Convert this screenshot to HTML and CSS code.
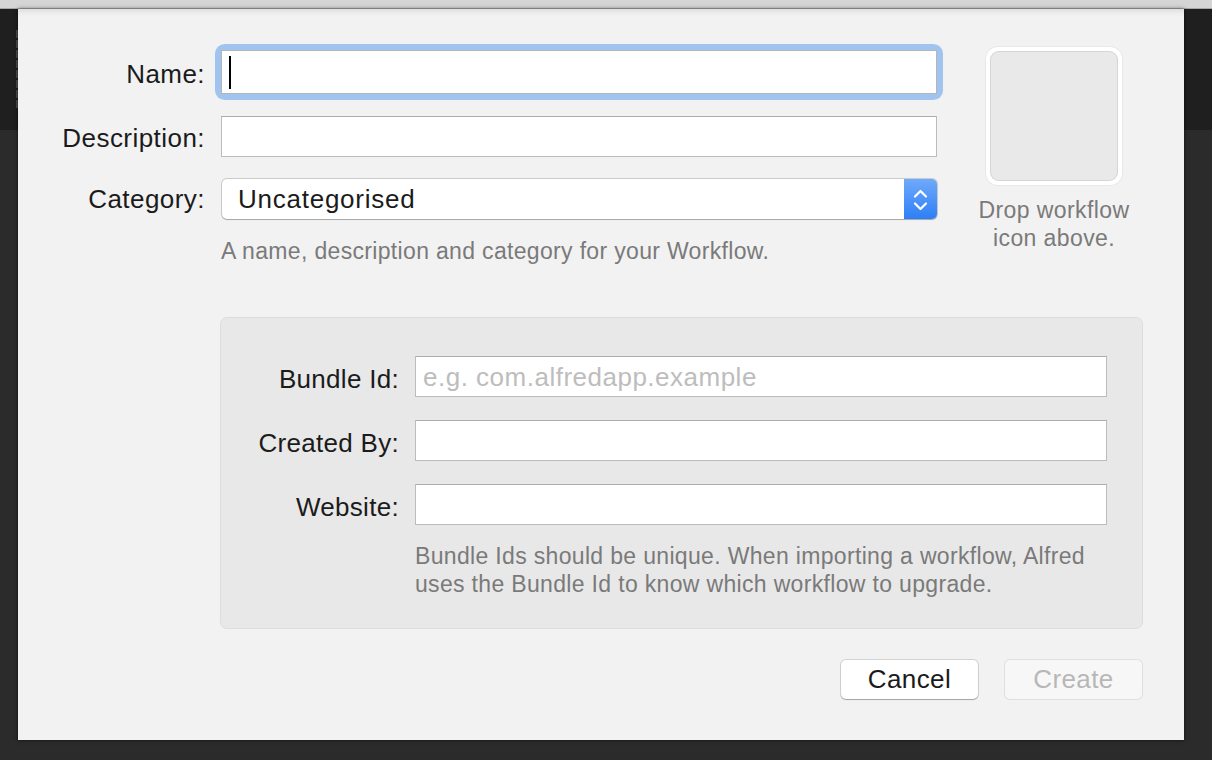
FILE: index.html
```html
<!DOCTYPE html>
<html lang="en">
<head>
<meta charset="utf-8">
<title>New Workflow</title>
<link rel="stylesheet" href="styles.css">
</head>
<body>
<div class="titlestrip"></div>
<div class="stage">
  <div class="gutter"><div class="dashes"></div></div>
  <div class="sheet">
    <div class="top-section">
      <div class="form-main">
        <label class="lbl">Name:</label>
        <div class="focus-ring"><div class="field field-name"><span class="caret"></span></div></div>
        <label class="lbl">Description:</label>
        <div class="field field-desc"></div>
        <label class="lbl lbl-popup">Category:</label>
        <div class="popup">
          <span class="popup-text">Uncategorised</span>
          <span class="stepper">
            <svg width="33" height="40" viewBox="0 0 33 40">
              <path d="M11 17.5 L16.5 12 L22 17.5" fill="none" stroke="#fff" stroke-width="2.2" stroke-linecap="round" stroke-linejoin="round"/>
              <path d="M11 24.5 L16.5 30 L22 24.5" fill="none" stroke="#fff" stroke-width="2.2" stroke-linecap="round" stroke-linejoin="round"/>
            </svg>
          </span>
        </div>
        <p class="hint">A name, description and category for your Workflow.</p>
      </div>
      <div class="icon-col">
        <div class="well"><div class="well-inner"></div></div>
        <p class="well-caption">Drop workflow<br>icon above.</p>
      </div>
    </div>
    <div class="group">
      <div class="group-grid">
        <label class="lbl">Bundle Id:</label>
        <div class="field"><span class="placeholder">e.g. com.alfredapp.example</span></div>
        <label class="lbl">Created By:</label>
        <div class="field"></div>
        <label class="lbl">Website:</label>
        <div class="field"></div>
        <p class="hint group-hint">Bundle Ids should be unique. When importing a workflow, Alfred<br>uses the Bundle Id to know which workflow to upgrade.</p>
      </div>
    </div>
    <div class="buttons">
      <button class="btn btn-cancel">Cancel</button>
      <button class="btn btn-create" disabled>Create</button>
    </div>
  </div>
</div>
</body>
</html>
```

FILE: styles.css
```css
* { box-sizing: border-box; }

html, body {
  margin: 0;
  padding: 0;
}

body {
  width: 1212px;
  height: 760px;
  overflow: hidden;
  background: linear-gradient(#1f1f1f 0, #1f1f1f 130px, #2b2b2b 130px, #2b2b2b 100%);
  font-family: "Liberation Sans", Arial, sans-serif;
  color: #1b1b1b;
}

.titlestrip {
  height: 9px;
  background: #d6d5d6;
  border-bottom: 1px solid #a8a7a8;
}

.stage {
  display: flex;
  align-items: flex-start;
}

.gutter {
  width: 18px;
  flex: none;
}

.dashes {
  margin-top: 21px;
  margin-left: 16px;
  width: 2px;
  height: 80px;
  background: repeating-linear-gradient(#4d4d4d 0, #4d4d4d 8px, transparent 8px, transparent 10px);
}

.sheet {
  width: 1166px;
  height: 731px;
  background: #f2f2f2;
  box-shadow: 0 0 4px rgba(0, 0, 0, 0.6), inset 0 7px 6px -5px rgba(0, 0, 0, 0.10);
  padding-top: 38px;
}

.top-section {
  display: flex;
  align-items: flex-start;
}

.form-main {
  width: 919px;
  margin-top: 3px;
  display: grid;
  grid-template-columns: 187px 716px;
  column-gap: 16px;
  row-gap: 22px;
  align-items: center;
}

.lbl {
  font-size: 26px;
  letter-spacing: 0.45px;
  line-height: 30px;
  padding-top: 3px;
  text-align: right;
  color: #1b1b1b;
  white-space: nowrap;
}

.lbl-popup {
  padding-top: 0;
}

.field {
  height: 41px;
  background: #fff;
  border: 1px solid #bcbcbc;
  border-top-color: #adadad;
  display: flex;
  align-items: center;
  padding-left: 7px;
}

.focus-ring {
  border-radius: 4px;
  box-shadow: 0 0 0 6px #a0c4ef;
}

.field-name {
  height: 44px;
  border-color: #b5b5b5;
}

.caret {
  width: 2px;
  height: 33px;
  background: #000;
}

.field-desc {
  height: 41px;
}

.popup {
  height: 40px;
  background: #fff;
  border-radius: 5px;
  box-shadow: 0 0 0 1px rgba(0, 0, 0, 0.16), 0 1px 1px rgba(0, 0, 0, 0.18);
  display: flex;
  align-items: center;
  justify-content: space-between;
  overflow: hidden;
  margin-left: 1px;
}

.popup-text {
  font-size: 26px;
  letter-spacing: 0.75px;
  padding-left: 16px;
  padding-top: 0;
  color: #1b1b1b;
}

.stepper {
  width: 33px;
  height: 40px;
  background: linear-gradient(#6faafa, #2d7ff7);
  display: flex;
}

.hint {
  grid-column: 2;
  margin: -4px 0 0 0;
  font-size: 23px;
  letter-spacing: 0.33px;
  line-height: 28px;
  color: #7a7a7a;
  white-space: nowrap;
}

.icon-col {
  width: 136px;
  margin-left: 49px;
  display: flex;
  flex-direction: column;
  align-items: center;
}

.well {
  width: 136px;
  height: 138px;
  background: #fff;
  border-radius: 12px;
  padding: 4px;
  box-shadow: 0 0 0 1px rgba(0, 0, 0, 0.04);
}

.well-inner {
  width: 100%;
  height: 100%;
  border-radius: 9px;
  background: #e9e9e9;
  box-shadow: inset 0 0 0 1px #d6d6d6;
}

.well-caption {
  margin: 11px 0 0 0;
  font-size: 23px;
  letter-spacing: 0.4px;
  line-height: 28px;
  text-align: center;
  color: #7a7a7a;
  white-space: nowrap;
}

.group {
  margin-top: 52px;
  margin-left: 202px;
  width: 923px;
  height: 312px;
  background: #e8e8e8;
  border: 1px solid #dddddd;
  border-radius: 7px;
  padding-top: 38px;
}

.group-grid {
  display: grid;
  grid-template-columns: 178px 692px;
  column-gap: 16px;
  row-gap: 23px;
  align-items: center;
}

.group-grid .lbl {
  letter-spacing: 0.3px;
  padding-top: 4px;
}

.group-grid .field {
  height: 41px;
}

.placeholder {
  font-size: 26px;
  letter-spacing: 0.5px;
  padding-top: 2px;
  color: #bdbdbd;
}

.group-hint {
  margin-top: -6px;
}

.buttons {
  display: flex;
  justify-content: flex-end;
  gap: 27px;
  padding-right: 42px;
  margin-top: 31px;
}

.btn {
  width: 137px;
  height: 39px;
  border-radius: 5px;
  font-family: "Liberation Sans", Arial, sans-serif;
  font-size: 26px;
  letter-spacing: 0.4px;
  padding: 0;
  border: none;
}

.btn-cancel {
  background: #fff;
  color: #1b1b1b;
  box-shadow: 0 0 0 1px rgba(0, 0, 0, 0.13), 0 1px 1px rgba(0, 0, 0, 0.22);
}

.btn-create {
  background: #f7f7f7;
  color: #b7b7b7;
  box-shadow: 0 0 0 1px rgba(0, 0, 0, 0.08);
}
```
